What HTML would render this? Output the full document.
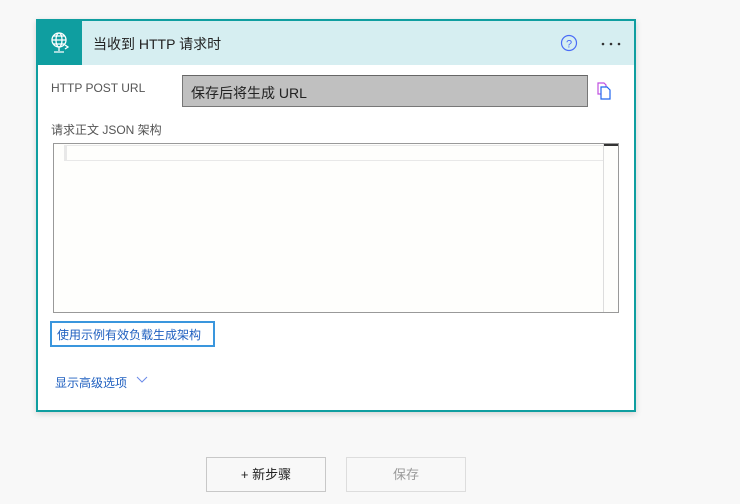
<!DOCTYPE html>
<html><head><meta charset="utf-8"><style>
*{margin:0;padding:0;box-sizing:border-box}
body{width:740px;height:504px;background:#f8f8f8;font-family:"Liberation Sans","Noto Sans CJK SC",sans-serif;position:relative;overflow:hidden}
.abs{position:absolute}
.card{left:36px;top:19px;width:600px;height:393px;border:2px solid #0f9ea0;background:#fff;box-shadow:0 2px 6px rgba(0,0,0,.15)}
.hdr{left:0;top:0;width:596px;height:44px;background:#d6eef1}
.ico{left:0;top:0;width:44px;height:44px;background:#0f9ea0}
.btn{top:457px;width:120px;height:35px;border:1px solid #c8c8c8;background:#f8f8f8;font-size:13px;text-align:center;line-height:33px}
</style></head><body>
<div class="abs card">
 <div class="abs hdr">
  <div class="abs ico"><svg width="44" height="44" viewBox="0 0 44 44" fill="none" stroke="#fff" stroke-width="1.3"><circle cx="21" cy="19" r="7"/><ellipse cx="21" cy="19" rx="3" ry="7"/><path d="M14 19h14M15 15h12M15 23h12M21 26v4M16 31h10M27 24l3 2-3 2"/></svg></div>
  <div class="abs" style="left:55px;top:13px;font-size:14px;color:#222">当收到 HTTP 请求时</div>
  <svg class="abs" style="left:522px;top:13px" width="18" height="18"><circle cx="9" cy="9" r="7.5" fill="none" stroke="#4a6cf7" stroke-width="1.2"/><text x="9" y="13.5" font-size="11" text-anchor="middle" fill="#4a6cf7" font-family="Liberation Sans">?</text></svg>
  <svg class="abs" style="left:562px;top:20px" width="24" height="6" fill="#333"><circle cx="3" cy="3" r="1.3"/><circle cx="11" cy="3" r="1.3"/><circle cx="19" cy="3" r="1.3"/></svg>
 </div>
 <div class="abs" style="left:13px;top:60px;font-size:12px;color:#555">HTTP POST URL</div>
 <div class="abs" style="left:144px;top:54px;width:406px;height:32px;background:#c0c0c0;border:1px solid #777;border-top-color:#666;font-size:14px;color:#222;padding:7px 8px">保存后将生成 URL</div>
 <svg class="abs" style="left:558px;top:61px" width="16" height="18" fill="#fff" stroke="#2266ee" stroke-width="1.2"><path d="M2 1h6l2 2v9H2z" stroke="#c050e0"/><path d="M5 5h6l3 3v9H5z"/></svg>
 <div class="abs" style="left:13px;top:100px;font-size:12px;color:#555">请求正文 JSON 架构</div>
 <div class="abs" style="left:15px;top:122px;width:566px;height:170px;border:1px solid #999;background:#fefefc">
  <div class="abs" style="left:10px;top:1px;width:540px;height:16px;border:1px solid #e8e8e8;border-left-width:3px;border-right:none"></div>
  <div class="abs" style="left:549px;top:0;width:1px;height:168px;background:#ddd"></div>
  <div class="abs" style="left:550px;top:0;width:14px;height:2px;background:#333"></div>
 </div>
 <div class="abs" style="left:12px;top:300px;width:165px;height:26px;border:2px solid #3a96dd;font-size:12px;color:#2060c0;padding:3px 5px">使用示例有效负载生成架构</div>
 <div class="abs" style="left:17px;top:353px;font-size:12px;color:#2060c0">显示高级选项</div>
 <svg class="abs" style="left:98px;top:355px" width="12" height="8"><path d="M1 1l5 5 5-5" fill="none" stroke="#6a8ae8" stroke-width="1"/></svg>
</div>
<div class="abs btn" style="left:206px;color:#222">+ 新步骤</div>
<div class="abs btn" style="left:346px;color:#999;border-color:#ddd">保存</div>
</body></html>
